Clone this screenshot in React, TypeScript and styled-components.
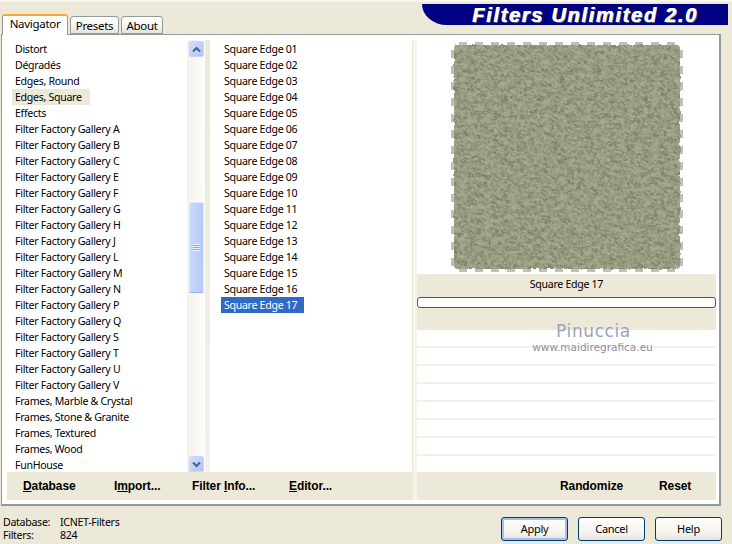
import React from "react";
import styled, { createGlobalStyle } from "styled-components";

const Global = createGlobalStyle`
  html, body { margin: 0; padding: 0; background: #ece9d8; }
  body { font-family: "Noto Sans", "Liberation Sans", sans-serif; font-size: 10.6px; letter-spacing: -0.3px; color: #000; }
`;

const Win = styled.div`
  width: 732px;
  height: 544px;
  background: #ece9d8;
  display: flex;
  flex-direction: column;
  overflow: hidden;
  border-top: 2px solid #f7f5ee;
  box-sizing: border-box;
`;
const Top = styled.div`
  height: 32px;
  display: flex;
  justify-content: space-between;
  align-items: flex-start;
  padding: 0 4px 0 2px;
`;
const Tabs = styled.div`
  display: flex;
  align-items: flex-end;
  height: 33px;
  position: relative;
  z-index: 2;
`;
const Tab = styled.div<{ $active?: boolean; $w: number }>`
  box-sizing: border-box;
  height: ${(p) => (p.$active ? 21 : 18)}px;
  margin-bottom: ${(p) => (p.$active ? 0 : 1)}px;
  margin-right: 2px;
  width: ${(p) => p.$w}px;
  text-align: center;
  line-height: ${(p) => (p.$active ? 16 : 17)}px;
  font-size: 11.5px;
  letter-spacing: -0.3px;
  background: ${(p) => (p.$active ? "#fff" : "linear-gradient(#fff, #f3f1e8 70%, #e6e3d4)")};
  border: 1px solid #919b9c;
  border-bottom: ${(p) => (p.$active ? "none" : "1px solid #919b9c")};
  border-top: ${(p) => (p.$active ? "2px solid #f7a92c" : "1px solid #919b9c")};
  border-radius: 3px 3px 0 0;
`;
const Banner = styled.div`
  width: 306px;
  height: 21px;
  margin-top: 2px;
  background: #000080;
  border-bottom-left-radius: 26px 22px;
  color: #fff;
  font-family: "Liberation Sans", sans-serif;
  font-weight: 700;
  font-style: italic;
  font-size: 20px;
  line-height: 22px;
  letter-spacing: 1.7px;
  padding-left: 50px;
  box-sizing: border-box;
  white-space: nowrap;
  text-shadow: 0.6px 0 0 #fff, 1.2px 1px 0 #667;
`;
const Panel = styled.div`
  box-sizing: border-box;
  width: 720px;
  height: 472px;
  margin-left: 1px;
  background: #fff;
  border: 1px solid #919b9c;
  border-right-width: 2px;
  border-bottom-width: 2px;
  padding: 5px 3px 4px 5px;
  display: grid;
  grid-template-columns: 198px 5px 202px 5px 1fr;
  grid-template-rows: 432px 28px;
`;
const ListPane = styled.div<{ $col: number }>`
  grid-column: ${(p) => p.$col};
  grid-row: 1;
  display: flex;
  justify-content: space-between;
  overflow: hidden;
`;
const ListBody = styled.div`
  padding-top: 1px;
  flex: 1;
  overflow: hidden;
`;
const Row = styled.div<{ $sel?: "gray" | "blue"; $mid?: boolean }>`
  height: 16px;
  line-height: 16px;
  width: ${(p) => (p.$sel === "blue" ? "83px" : p.$sel === "gray" ? "78px" : "auto")};
  padding-left: 3px;
  margin-left: ${(p) => (p.$mid ? 11 : 5)}px;
  box-sizing: border-box;
  white-space: nowrap;
  background: ${(p) => (p.$sel === "blue" ? "#316ac5" : p.$sel === "gray" ? "#ece9d8" : "transparent")};
  color: ${(p) => (p.$sel === "blue" ? "#fff" : "#000")};
`;
const DividerA = styled.div`
  grid-column: 2;
  grid-row: 1;
  background: linear-gradient(#ece9d8, #f4f2e8);
`;
const DividerB = styled.div`
  grid-column: 4;
  grid-row: 1 / 3;
  background: #f6f4ec;
  border-left: 1px solid #ece9d8;
`;
const Scroll = styled.div`
  width: 18px;
  display: flex;
  flex-direction: column;
  align-items: center;
  background: linear-gradient(90deg, #f3f1ec, #fefefe);
`;
const Arrow = styled.div`
  width: 15px;
  height: 16px;
  margin-top: 1px;
  box-sizing: border-box;
  background: linear-gradient(135deg, #d4e0fd, #aec3f5);
  border: 1px solid #c6d6fa;
  border-radius: 2px;
  display: flex;
  align-items: center;
  justify-content: center;
`;
const Track = styled.div`
  flex: 1;
  display: flex;
  flex-direction: column;
  width: 15px;
`;
const Thumb = styled.div`
  margin-top: 145px;
  width: 15px;
  height: 91px;
  box-sizing: border-box;
  background: linear-gradient(90deg, #c9d8fc, #b7cafa);
  border: 1px solid #e0e8fd;
  border-bottom-color: #98aee8;
  border-radius: 2px;
  display: flex;
  align-items: center;
  justify-content: center;
`;
const Grip = styled.div`
  width: 7px;
  height: 7px;
  background: repeating-linear-gradient(#eef3fe 0 1px, #8aa5e6 1px 2px);
`;
const PreviewCol = styled.div`
  grid-column: 5;
  grid-row: 1;
  display: flex;
  flex-direction: column;
`;
const Preview = styled.div`
  height: 234px;
  display: flex;
  justify-content: center;
  align-items: center;
`;
const Name = styled.div`
  height: 20px;
  line-height: 20px;
  background: #ece9d8;
  text-align: center;
`;
const Gauge = styled.div`
  height: 36px;
  background: #ece9d8;
  padding-top: 3px;
  box-sizing: border-box;
`;
const GaugeBar = styled.div`
  height: 11px;
  box-sizing: border-box;
  background: #fff;
  border: 1px solid #555;
  border-radius: 3px;
`;
const Params = styled.div`
  flex: 1;
  position: relative;
  display: flex;
  flex-direction: column;
`;
const Param = styled.div`
  height: 16px;
  border-bottom: 2px solid #f3f1e6;
`;
const Watermark = styled.div`
  position: absolute;
  top: -8px;
  left: 52px;
  right: 0;
  text-align: center;
  color: #9fa1bd;
  pointer-events: none;
  letter-spacing: 0;
`;
const WmName = styled.div`
  font-family: "DejaVu Sans", sans-serif;
  font-size: 17px;
  line-height: 19px;
  letter-spacing: 0.6px;
  padding-left: 2px;
`;
const WmUrl = styled.div`
  font-family: "DejaVu Sans", sans-serif;
  font-size: 10.5px;
  line-height: 13px;
  color: #9090a2;
`;
const LeftBar = styled.div`
  grid-column: 1 / 4;
  grid-row: 2;
  padding-left: 16px;
  background: #ece9d8;
  display: flex;
  align-items: center;
  font-family: "Liberation Sans", sans-serif;
  font-weight: 700;
  font-size: 12px;
  letter-spacing: -0.1px;
`;
const RightBar = styled(LeftBar)`
  grid-column: 5;
  padding-left: 143px;
`;
const BarBtn = styled.div<{ $w: number }>`
  width: ${(p) => p.$w}px;
  flex: none;
  white-space: nowrap;
`;
const Footer = styled.div`
  flex: 1;
  display: flex;
  justify-content: space-between;
  padding: 6px 10px 0 3px;
`;
const Info = styled.div`
  display: grid;
  grid-template-columns: 57px auto;
  grid-auto-rows: 13px;
  line-height: 13px;
  margin-top: 4px;
`;
const Buttons = styled.div`
  display: flex;
  gap: 10px;
  padding-top: 5px;
`;
const Btn = styled.div<{ $default?: boolean }>`
  box-sizing: border-box;
  width: 67px;
  height: 24px;
  text-align: center;
  line-height: 21px;
  font-size: 11px;
  border: 1px solid #003c74;
  border-radius: 3px;
  background: linear-gradient(#fff, #f4f3ee 70%, #e6e3d6);
  box-shadow: ${(p) => (p.$default ? "inset 0 0 0 2px #a5bfe9" : "none")};
`;

const left = ["Distort","Dégradés","Edges, Round","Edges, Square","Effects","Filter Factory Gallery A","Filter Factory Gallery B","Filter Factory Gallery C","Filter Factory Gallery E","Filter Factory Gallery F","Filter Factory Gallery G","Filter Factory Gallery H","Filter Factory Gallery J","Filter Factory Gallery L","Filter Factory Gallery M","Filter Factory Gallery N","Filter Factory Gallery P","Filter Factory Gallery Q","Filter Factory Gallery S","Filter Factory Gallery T","Filter Factory Gallery U","Filter Factory Gallery V","Frames, Marble & Crystal","Frames, Stone & Granite","Frames, Textured","Frames, Wood","FunHouse"];
const mid = Array.from({ length: 17 }, (_, i) => `Square Edge ${String(i + 1).padStart(2, "0")}`);

const Chevron = ({ down }: { down?: boolean }) => (
  <svg width="9" height="7" viewBox="0 0 9 7">
    <path d={down ? "M1 1.5 L4.5 5 L8 1.5" : "M1 5.5 L4.5 2 L8 5.5"} fill="none" stroke="#4d6185" strokeWidth="2" />
  </svg>
);

const Texture = () => {
  const dashes: React.ReactNode[] = [];
  for (let i = 0; i < 14; i++) {
    const p = 8 + i * 16;
    dashes.push(<rect key={"t" + i} x={p} y="0" width="8" height="6" />);
    dashes.push(<rect key={"b" + i} x={p} y="224" width="8" height="6" />);
    dashes.push(<rect key={"l" + i} x="0" y={p} width="6" height="8" />);
    dashes.push(<rect key={"r" + i} x="226" y={p} width="6" height="8" />);
  }
  return (
    <svg width="232" height="230" viewBox="0 0 232 230">
      <defs>
        <filter id="stone" x="0" y="0" width="100%" height="100%">
          <feTurbulence type="fractalNoise" baseFrequency="0.12 0.22" numOctaves="5" seed="11" />
          <feColorMatrix type="matrix" values="0 0 0 0 0.56  0 0 0 0 0.58  0 0 0 0 0.44  1.1 0 0 0 -0.42" />
          <feComposite in2="SourceGraphic" operator="in" />
          <feMerge><feMergeNode in="SourceGraphic" /><feMergeNode /></feMerge>
        </filter>
        <filter id="dark" x="0" y="0" width="100%" height="100%">
          <feTurbulence type="fractalNoise" baseFrequency="0.3 0.42" numOctaves="3" seed="3" />
          <feColorMatrix type="matrix" values="0 0 0 0 0.4  0 0 0 0 0.41  0 0 0 0 0.3  2.4 0 0 0 -0.85" />
          <feComposite in2="SourceGraphic" operator="in" />
          <feMerge><feMergeNode in="SourceGraphic" /><feMergeNode /></feMerge>
        </filter>
        <filter id="rough" x="-3%" y="-3%" width="106%" height="106%">
          <feTurbulence type="fractalNoise" baseFrequency="0.25" numOctaves="2" seed="2" result="n" />
          <feDisplacementMap in="SourceGraphic" in2="n" scale="3" />
        </filter>
      </defs>
      <g fill="#bfbfbf">{dashes}</g>
      <g filter="url(#rough)">
        <g filter="url(#dark)">
          <g filter="url(#stone)">
            <rect x="3" y="3" width="226" height="224" rx="4" fill="#7f8463" />
          </g>
        </g>
      </g>
    </svg>
  );
};

const ScrollBar = () => (
  <Scroll>
    <Arrow><Chevron /></Arrow>
    <Track>
      <Thumb><Grip /></Thumb>
    </Track>
    <Arrow><Chevron down /></Arrow>
  </Scroll>
);

export default function App() {
  return (
    <Win>
      <Global />
      <Top>
        <Tabs>
          <Tab $active $w={66}>Navigator</Tab>
          <Tab $w={49}>Presets</Tab>
          <Tab $w={42}>About</Tab>
        </Tabs>
        <Banner>Filters Unlimited 2.0</Banner>
      </Top>
      <Panel>
        <ListPane $col={1}>
          <ListBody>
            {left.map((t) => (
              <Row key={t} $sel={t === "Edges, Square" ? "gray" : undefined}>{t}</Row>
            ))}
          </ListBody>
          <ScrollBar />
        </ListPane>
        <DividerA />
        <ListPane $col={3}>
          <ListBody>
            {mid.map((t, i) => (
              <Row key={t} $mid $sel={i === 16 ? "blue" : undefined}>{t}</Row>
            ))}
          </ListBody>
        </ListPane>
        <DividerB />
        <PreviewCol>
          <Preview><Texture /></Preview>
          <Name>Square Edge 17</Name>
          <Gauge><GaugeBar /></Gauge>
          <Params>
            <Watermark>
              <WmName>Pinuccia</WmName>
              <WmUrl>www.maidiregrafica.eu</WmUrl>
            </Watermark>
            {Array.from({ length: 7 }, (_, i) => <Param key={i} />)}
          </Params>
        </PreviewCol>
        <LeftBar>
          <BarBtn $w={91}><u>D</u>atabase</BarBtn>
          <BarBtn $w={78}>I<u>m</u>port...</BarBtn>
          <BarBtn $w={97}>Filter <u>I</u>nfo...</BarBtn>
          <BarBtn $w={60}><u>E</u>ditor...</BarBtn>
        </LeftBar>
        <RightBar>
          <BarBtn $w={99}>Randomize</BarBtn>
          <BarBtn $w={50}>Reset</BarBtn>
        </RightBar>
      </Panel>
      <Footer>
        <Info>
          <span>Database:</span><span>ICNET-Filters</span>
          <span>Filters:</span><span>824</span>
        </Info>
        <Buttons>
          <Btn $default>Apply</Btn>
          <Btn>Cancel</Btn>
          <Btn>Help</Btn>
        </Buttons>
      </Footer>
    </Win>
  );
}
